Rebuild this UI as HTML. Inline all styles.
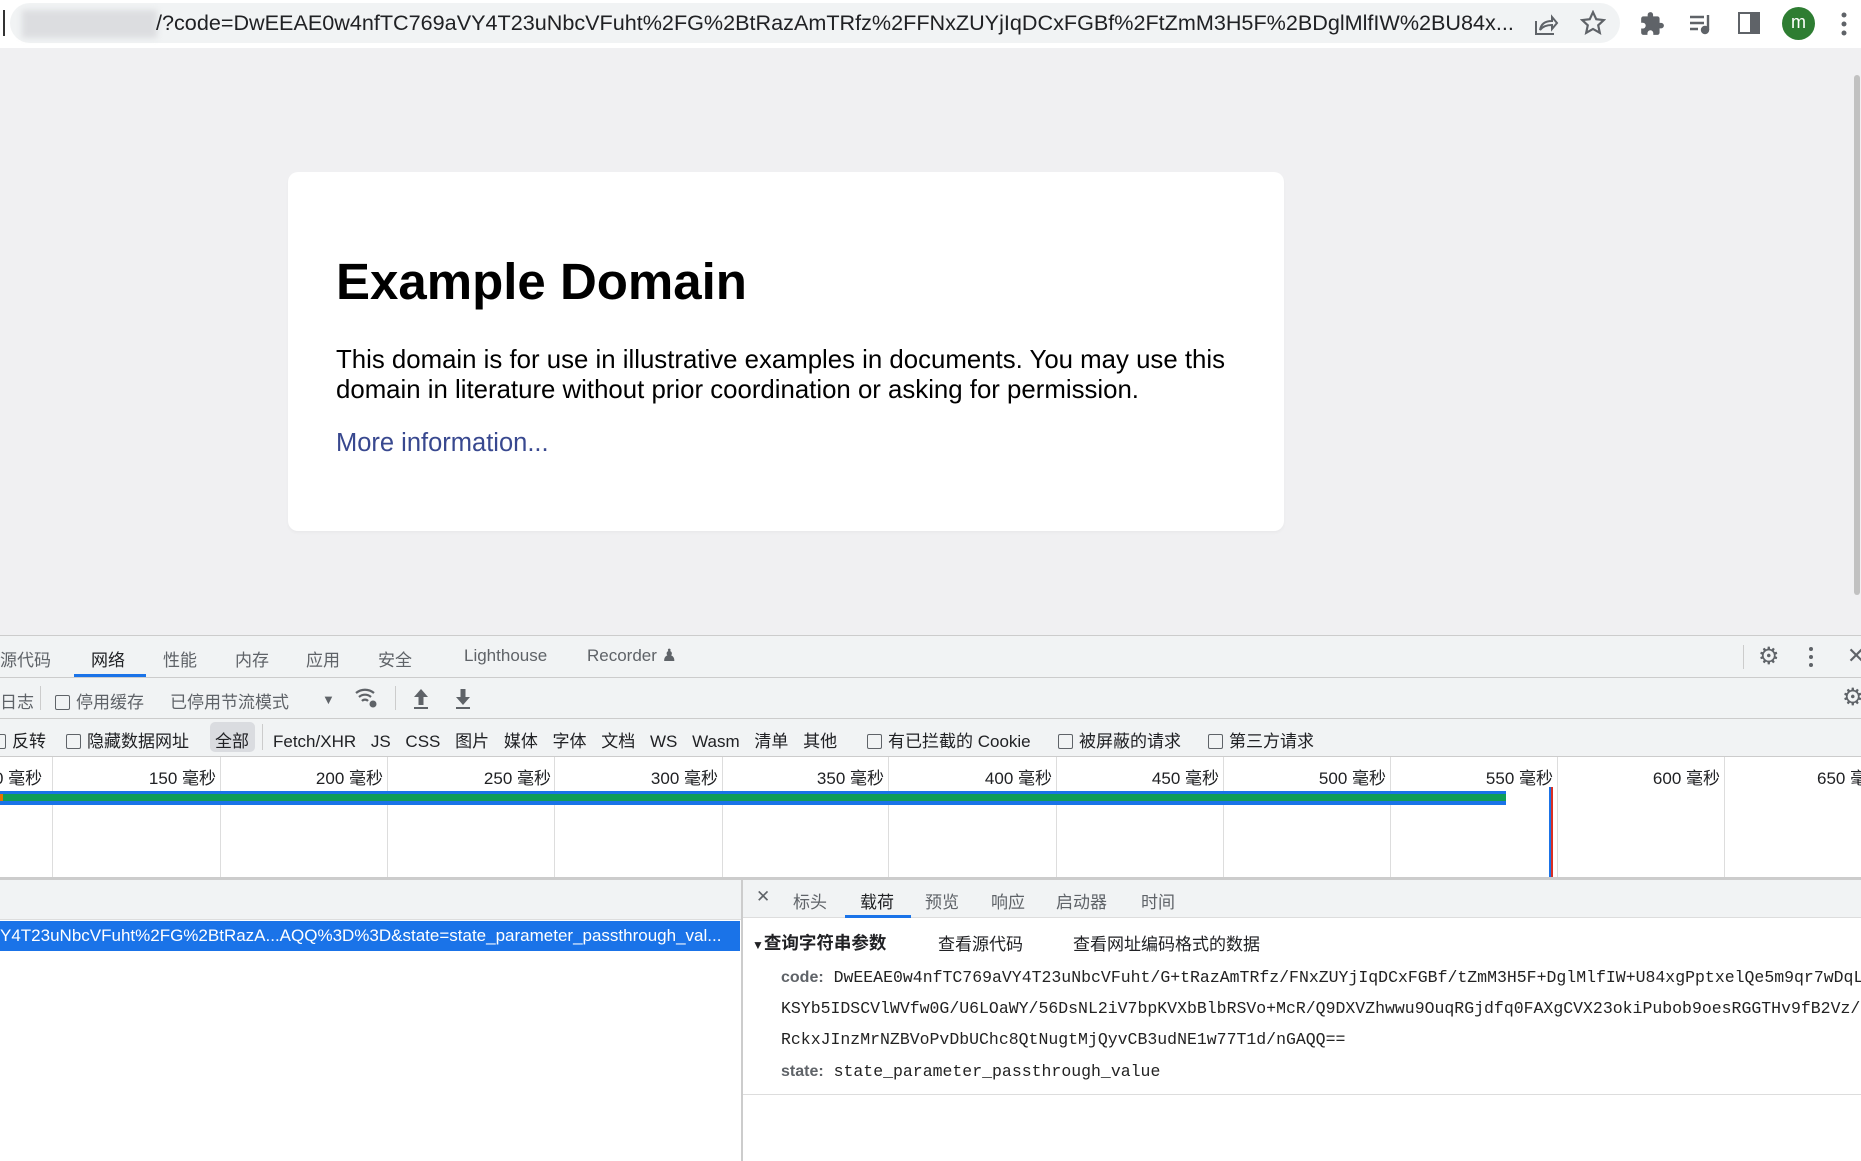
<!DOCTYPE html>
<html><head><meta charset="utf-8"><style>
*{margin:0;padding:0;box-sizing:border-box}
body{width:1861px;height:1161px;overflow:hidden;background:#f0f0f2;font-family:"Liberation Sans","Noto Sans CJK SC",sans-serif;position:relative;color:#3c4043}
.a{position:absolute;white-space:nowrap}
.dt{font-size:17px;color:#5f6368}
.mono{font-family:"Liberation Mono","Noto Sans CJK SC",monospace;font-size:16.5px;color:#222}
.cb{display:inline-block;width:15px;height:15px;border:1.5px solid #5f6368;border-radius:2px;vertical-align:-2px;margin-right:6px}
.vl{position:absolute;width:1px;background:#ddd}
</style></head><body>
<!-- top bar -->
<div class="a" style="left:0;top:0;width:1861px;height:48px;background:#fff"></div>
<div class="a" style="left:10px;top:3px;width:1610px;height:40px;background:#f1f3f4;border-radius:20px"></div>
<div class="a" style="left:3px;top:10px;width:2px;height:26px;background:#333"></div>
<div class="a" style="left:22px;top:10px;width:135px;height:28px;background:#dcdde0;filter:blur(3px)"></div>
<div class="a" style="left:156px;top:10px;font-size:21.6px;color:#202124">/?code=DwEEAE0w4nfTC769aVY4T23uNbcVFuht%2FG%2BtRazAmTRfz%2FFNxZUYjIqDCxFGBf%2FtZmM3H5F%2BDglMlfIW%2BU84x...</div>
<svg class="a" style="left:1533px;top:11px" width="26" height="26" viewBox="0 0 26 26" fill="none" stroke="#5f6368" stroke-width="2"><path d="M3 10v13h18"/><path d="M7 19c1-6 5-9 12-9V6l5 6-5 6v-4c-5 0-9 1-12 5z"/></svg>
<svg class="a" style="left:1580px;top:10px" width="26" height="26" viewBox="0 0 24 24" fill="none" stroke="#5f6368" stroke-width="2"><path d="M12 2l3 6.5 7 .8-5.2 4.8 1.5 7L12 17.5 5.7 21.1l1.5-7L2 9.3l7-.8z"/></svg>
<svg class="a" style="left:1639px;top:11px" width="26" height="26" viewBox="0 0 24 24" fill="#5f6368"><path d="M20.5 11H19V7a2 2 0 00-2-2h-4V3.5a2.5 2.5 0 00-5 0V5H4a2 2 0 00-2 2v3.8h1.5a2.7 2.7 0 010 5.4H2V20a2 2 0 002 2h3.8v-1.5a2.7 2.7 0 015.4 0V22H17a2 2 0 002-2v-4h1.5a2.5 2.5 0 000-5z"/></svg>
<svg class="a" style="left:1688px;top:12px" width="26" height="24" viewBox="0 0 26 24" fill="none" stroke="#5f6368" stroke-width="2.4"><path d="M2 5h14M2 11h14M2 17h8"/><path d="M20 3v15"/><circle cx="17" cy="18" r="3" fill="#5f6368"/></svg>
<div class="a" style="left:1738px;top:12px;width:22px;height:22px;border:2.5px solid #5f6368;border-right-width:10px"></div>
<div class="a" style="left:1782px;top:7px;width:33px;height:33px;border-radius:50%;background:#2e7d32;color:#fff;font-size:18px;text-align:center;line-height:31px">m</div>
<svg class="a" style="left:1839px;top:10px" width="10" height="28" viewBox="0 0 10 28" fill="#5f6368"><circle cx="5" cy="5" r="2.5"/><circle cx="5" cy="14" r="2.5"/><circle cx="5" cy="23" r="2.5"/></svg>
<!-- scrollbar -->
<div class="a" style="left:1854px;top:75px;width:6px;height:520px;background:#c1c1c1;border-radius:3px"></div>
<!-- card -->
<div class="a" style="left:288px;top:172px;width:996px;height:359px;background:#fff;border-radius:10px;box-shadow:0 2px 3px rgba(0,0,0,.03)"></div>
<div class="a" style="left:336px;top:252px;font-size:51px;font-weight:bold;color:#000">Example Domain</div>
<div class="a" style="left:336px;top:345px;font-size:25.8px;line-height:30px;color:#000">This domain is for use in illustrative examples in documents. You may use this<br>domain in literature without prior coordination or asking for permission.</div>
<div class="a" style="left:336px;top:429px;font-size:25.5px;color:#38488f">More information...</div>
<!-- devtools -->
<div class="a" style="left:0;top:635px;width:1861px;height:122px;background:#f1f3f4;border-top:1px solid #ccc"></div>
<div class="a" style="left:0;top:677px;width:1861px;height:1px;background:#ccc"></div>
<div class="a" style="left:0;top:718px;width:1861px;height:1px;background:#ccc"></div>
<div class="a" style="left:0;top:756px;width:1861px;height:1px;background:#ccc"></div>
<div class="a dt" style="left:0;top:646px">源代码</div>
<div class="a dt" style="left:91px;top:646px;color:#202124">网络</div>
<div class="a" style="left:74px;top:674px;width:72px;height:3px;background:#1a73e8"></div>
<div class="a dt" style="left:163px;top:646px">性能</div>
<div class="a dt" style="left:235px;top:646px">内存</div>
<div class="a dt" style="left:306px;top:646px">应用</div>
<div class="a dt" style="left:378px;top:646px">安全</div>
<div class="a dt" style="left:464px;top:646px">Lighthouse</div>
<div class="a dt" style="left:587px;top:646px">Recorder ♟</div>
<div class="a" style="left:1743px;top:645px;width:1px;height:24px;background:#ccc"></div>
<div class="a dt" style="left:1758px;top:642px;font-size:24px">⚙</div>
<svg class="a" style="left:1807px;top:645px" width="8" height="24" viewBox="0 0 8 24" fill="#5f6368"><circle cx="4" cy="4" r="2"/><circle cx="4" cy="12" r="2"/><circle cx="4" cy="20" r="2"/></svg>
<div class="a dt" style="left:1847px;top:643px;font-size:22px">✕</div>
<div class="a dt" style="left:0;top:688px">日志</div>
<div class="a" style="left:40px;top:686px;width:1px;height:24px;background:#ccc"></div>
<div class="a dt" style="left:55px;top:688px"><span class="cb"></span>停用缓存</div>
<div class="a dt" style="left:170px;top:688px">已停用节流模式</div>
<div class="a dt" style="left:322px;top:692px;font-size:13px">▼</div>
<svg class="a" style="left:354px;top:686px" width="26" height="24" viewBox="0 0 26 24" fill="none" stroke="#5f6368" stroke-width="2.2"><path d="M2 7a14 14 0 0118 0M5 11a9 9 0 0112 0M8 15a4 4 0 016 0"/><circle cx="19" cy="18" r="3.5" fill="#5f6368" stroke="none"/></svg>
<div class="a" style="left:395px;top:686px;width:1px;height:24px;background:#ccc"></div>
<svg class="a" style="left:412px;top:687px" width="18" height="24" viewBox="0 0 18 24" fill="#5f6368"><path d="M9 2l7 8h-4.5v8h-5v-8H2z"/><rect x="2" y="20" width="14" height="2"/></svg>
<svg class="a" style="left:454px;top:687px" width="18" height="24" viewBox="0 0 18 24" fill="#5f6368"><path d="M9 18l7-8h-4.5V2h-5v8H2z"/><rect x="2" y="20" width="14" height="2"/></svg>
<div class="a dt" style="left:1842px;top:683px;font-size:24px">⚙</div>
<div class="a dt" style="left:0;top:727px;color:#202124"><span class="cb" style="margin-left:-9px"></span>反转</div>
<div class="a dt" style="left:66px;top:727px;color:#202124"><span class="cb"></span>隐藏数据网址</div>
<div class="a" style="left:210px;top:722px;width:45px;height:30px;background:#dadce0;border-radius:5px"></div>
<div class="a dt" style="left:215px;top:727px;color:#202124">全部</div>
<div class="a" style="left:262px;top:724px;width:1px;height:26px;background:#ccc"></div>
<div class="a dt" style="left:273px;top:727px;color:#202124;word-spacing:10px">Fetch/XHR JS CSS 图片 媒体 字体 文档 WS Wasm 清单 其他</div>
<div class="a dt" style="left:867px;top:727px;color:#202124"><span class="cb"></span>有已拦截的 Cookie</div>
<div class="a dt" style="left:1058px;top:727px;color:#202124"><span class="cb"></span>被屏蔽的请求</div>
<div class="a dt" style="left:1208px;top:727px;color:#202124"><span class="cb"></span>第三方请求</div>
<!-- timeline -->
<div class="a" style="left:0;top:757px;width:1861px;height:120px;background:#fff"></div>
<div class="vl" style="left:52px;top:757px;height:120px"></div>
<div class="vl" style="left:220px;top:757px;height:120px"></div>
<div class="vl" style="left:387px;top:757px;height:120px"></div>
<div class="vl" style="left:554px;top:757px;height:120px"></div>
<div class="vl" style="left:722px;top:757px;height:120px"></div>
<div class="vl" style="left:888px;top:757px;height:120px"></div>
<div class="vl" style="left:1056px;top:757px;height:120px"></div>
<div class="vl" style="left:1223px;top:757px;height:120px"></div>
<div class="vl" style="left:1390px;top:757px;height:120px"></div>
<div class="vl" style="left:1557px;top:757px;height:120px"></div>
<div class="vl" style="left:1724px;top:757px;height:120px"></div>
<div class="a dt" style="top:764px;left:-6px;color:#202124">0 毫秒</div>
<div class="a dt" style="top:764px;right:1645px;color:#202124">150 毫秒</div>
<div class="a dt" style="top:764px;right:1478px;color:#202124">200 毫秒</div>
<div class="a dt" style="top:764px;right:1310px;color:#202124">250 毫秒</div>
<div class="a dt" style="top:764px;right:1143px;color:#202124">300 毫秒</div>
<div class="a dt" style="top:764px;right:977px;color:#202124">350 毫秒</div>
<div class="a dt" style="top:764px;right:809px;color:#202124">400 毫秒</div>
<div class="a dt" style="top:764px;right:642px;color:#202124">450 毫秒</div>
<div class="a dt" style="top:764px;right:475px;color:#202124">500 毫秒</div>
<div class="a dt" style="top:764px;right:308px;color:#202124">550 毫秒</div>
<div class="a dt" style="top:764px;right:141px;color:#202124">600 毫秒</div>
<div class="a dt" style="top:764px;left:1817px;color:#202124">650 毫秒</div>
<div class="a" style="left:0;top:791px;width:1506px;height:14px;background:#1a73e8"></div>
<div class="a" style="left:0;top:794px;width:1506px;height:7px;background:#0f9d58"></div>
<div class="a" style="left:0;top:794px;width:3px;height:7px;background:#e37400"></div>
<div class="a" style="left:1549px;top:787px;width:2px;height:90px;background:#1a73e8"></div>
<div class="a" style="left:1551px;top:787px;width:2px;height:90px;background:#d93025"></div>
<!-- bottom -->
<div class="a" style="left:0;top:877px;width:1861px;height:3px;background:#ccc"></div>
<div class="a" style="left:0;top:880px;width:741px;height:281px;background:#fff"></div>
<div class="a" style="left:0;top:880px;width:741px;height:40px;background:#f1f3f4;border-bottom:1px solid #ddd"></div>
<div class="a" style="left:0;top:921px;width:740px;height:30px;background:#1a73e8;color:#fff;font-size:17px;line-height:30px">Y4T23uNbcVFuht%2FG%2BtRazA...AQQ%3D%3D&amp;state=state_parameter_passthrough_val...</div>
<div class="a" style="left:741px;top:880px;width:2px;height:281px;background:#ccc"></div>
<div class="a" style="left:743px;top:880px;width:1118px;height:281px;background:#fff"></div>
<div class="a" style="left:743px;top:880px;width:1118px;height:38px;background:#f1f3f4;border-bottom:1px solid #ddd"></div>
<div class="a dt" style="left:756px;top:887px;font-size:17px">✕</div>
<div class="a dt" style="left:793px;top:888px">标头</div>
<div class="a dt" style="left:860px;top:888px;color:#202124">载荷</div>
<div class="a" style="left:845px;top:915px;width:66px;height:3px;background:#1a73e8"></div>
<div class="a dt" style="left:925px;top:888px">预览</div>
<div class="a dt" style="left:991px;top:888px">响应</div>
<div class="a dt" style="left:1056px;top:888px">启动器</div>
<div class="a dt" style="left:1141px;top:888px">时间</div>
<div class="a" style="left:752px;top:930px;font-size:17.5px;font-weight:bold;color:#202124"><span style="font-size:12px">▼</span>查询字符串参数</div>
<div class="a dt" style="left:938px;top:930px;color:#202124">查看源代码</div>
<div class="a dt" style="left:1073px;top:930px;color:#202124">查看网址编码格式的数据</div>
<div class="a mono" style="left:781px;top:968px"><b style="font-family:'Liberation Sans';color:#5f6368;font-size:16px">code:</b> DwEEAE0w4nfTC769aVY4T23uNbcVFuht/G+tRazAmTRfz/FNxZUYjIqDCxFGBf/tZmM3H5F+DglMlfIW+U84xgPptxelQe5m9qr7wDqL</div>
<div class="a mono" style="left:781px;top:999px">KSYb5IDSCVlWVfw0G/U6LOaWY/56DsNL2iV7bpKVXbBlbRSVo+McR/Q9DXVZhwwu9OuqRGjdfq0FAXgCVX23okiPubob9oesRGGTHv9fB2Vz/</div>
<div class="a mono" style="left:781px;top:1030px">RckxJInzMrNZBVoPvDbUChc8QtNugtMjQyvCB3udNE1w77T1d/nGAQQ==</div>
<div class="a mono" style="left:781px;top:1062px"><b style="font-family:'Liberation Sans';color:#5f6368;font-size:16px">state:</b> state_parameter_passthrough_value</div>
<div class="a" style="left:743px;top:1094px;width:1118px;height:1px;background:#ddd"></div>
</body></html>
